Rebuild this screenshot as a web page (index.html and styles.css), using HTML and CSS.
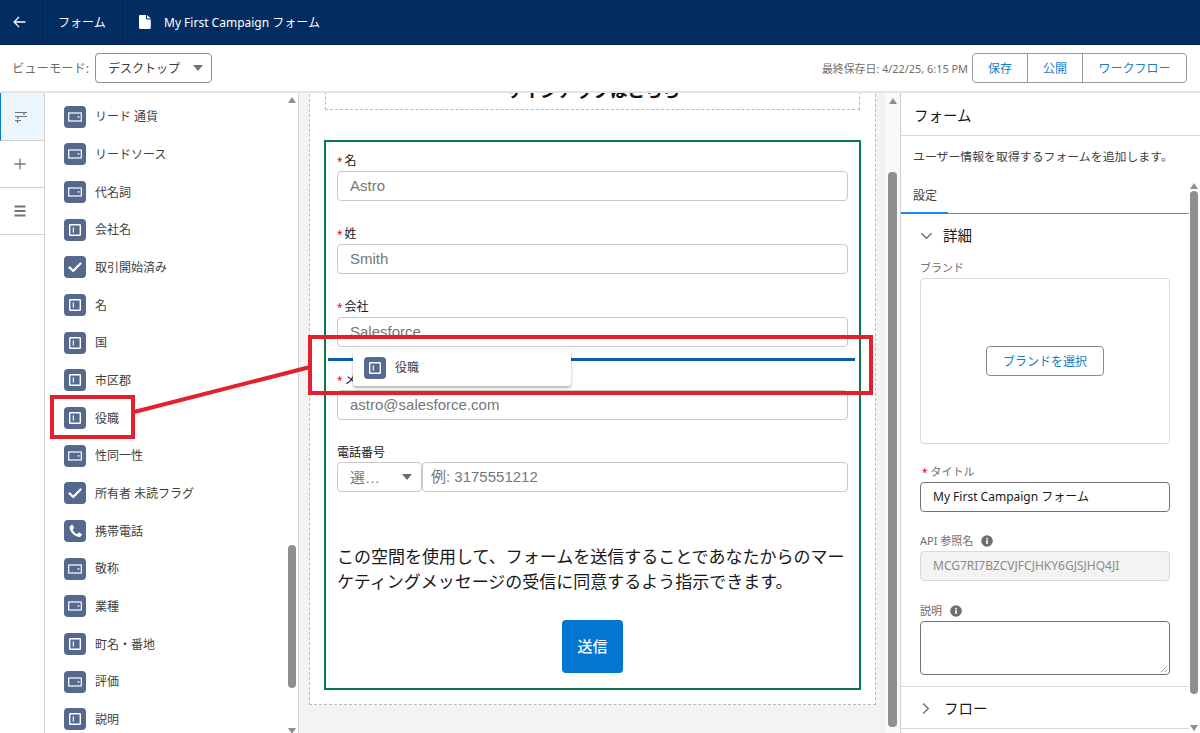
FILE: index.html
```html
<!DOCTYPE html>
<html lang="ja">
<head>
<meta charset="utf-8">
<title>My First Campaign フォーム</title>
<link rel="stylesheet" href="styles.css">
</head>
<body>
<svg class="defs" aria-hidden="true">
  <symbol id="i-pick" viewBox="0 0 22 22"><rect x="4.700" y="7" width="12.600" height="8" fill="none" stroke="#fff" stroke-width="1.200"/><rect x="13.600" y="10.200" width="1.800" height="1.400" fill="#fff"/></symbol>
  <symbol id="i-text" viewBox="0 0 22 22"><rect x="5.700" y="5.700" width="10.600" height="10.600" rx=".6" fill="none" stroke="#fff" stroke-width="1.400"/><rect x="8.700" y="8.300" width="1.400" height="5.400" fill="#dfe5f0"/></symbol>
  <symbol id="i-check" viewBox="0 0 22 22"><path d="M5.500 11.400l3.700 3.600 7.300-7.600" fill="none" stroke="#fff" stroke-width="2.200" stroke-linecap="round" stroke-linejoin="round"/></symbol>
  <symbol id="i-phone" viewBox="0 0 22 22"><path d="M7.300 4.900c.4-.3 1-.3 1.300.2l1.300 2c.3.4.2.9-.1 1.300l-.9.9c-.2.2-.2.4-.1.700.5 1 1 1.700 1.700 2.400.6.600 1.300 1.100 2.200 1.500.3.100.500.100.700-.100l.9-.9c.4-.4.900-.4 1.300-.1l2 1.300c.5.300.5 1 .1 1.400-.8.900-1.800 1.700-3 1.500-2.200-.3-4.300-1.600-5.900-3.200C7.300 12.200 5.900 10 5.600 7.900c-.2-1.200.7-2.200 1.700-3z" fill="#fff"/></symbol>
  <symbol id="i-info" viewBox="0 0 12 12"><circle cx="6" cy="6" r="5.800" fill="#706e6b"/><rect x="5.200" y="5.200" width="1.700" height="3.700" fill="#fff"/><rect x="5.200" y="2.900" width="1.700" height="1.500" fill="#fff"/></symbol>
</svg>

<div class="stage">
  <header class="topbar">
    <div class="tb-cell tb-back">
      <svg class="back" viewBox="0 0 14 12"><path d="M6 1L1.300 6 6 11M1.500 6H13" fill="none" stroke="#fff" stroke-width="1.500" stroke-linecap="round" stroke-linejoin="round"/></svg>
    </div>
    <div class="tb-cell tb-form">フォーム</div>
    <div class="tb-title">
      <svg class="doc" viewBox="0 0 12 14"><path d="M1.200 0H7v3.500c0 .6.400 1 1 1h3.800v8.300c0 .7-.5 1.200-1.200 1.200H1.200C.5 14 0 13.500 0 12.800V1.200C0 .5.500 0 1.200 0zM8 0l3.800 3.600H8z" fill="#fff"/></svg>
      <span>My First Campaign フォーム</span>
    </div>
  </header>

  <div class="toolbar">
    <span class="view-label">ビューモード:</span>
    <div class="select"><span>デスクトップ</span><i class="tri tri-lg"></i></div>
    <span class="saved">最終保存日: 4/22/25, 6:15 PM</span>
    <div class="btn-group">
      <span class="bg-btn bg-a">保存</span>
      <span class="bg-btn bg-a">公開</span>
      <span class="bg-btn bg-b">ワークフロー</span>
    </div>
  </div>

  <main class="main">
    <nav class="rail">
      <div class="rail-tab active">
        <svg class="rail-ic" viewBox="0 0 14 14"><path d="M1 2.500h12M1 6.500h12M1 10.500h6M10 2.500v2.500M4 6.500v2.500M3.500 10.500v2.500" fill="none" stroke="#747474" stroke-width="1.200"/></svg>
      </div>
      <div class="rail-tab">
        <svg class="rail-ic" viewBox="0 0 14 14"><path d="M7 1.500v11M1.500 7h11" fill="none" stroke="#747474" stroke-width="1.300"/></svg>
      </div>
      <div class="rail-tab">
        <svg class="rail-ic" viewBox="0 0 14 14"><path d="M1.500 2.500h11M1.500 7h11M1.500 11.500h11" fill="none" stroke="#747474" stroke-width="2"/></svg>
      </div>
    </nav>

    <section class="fields">
      <ul class="field-list">
        <li class="field-row"><svg class="fi"><use href="#i-pick"/></svg>リード 通貨</li>
        <li class="field-row"><svg class="fi"><use href="#i-pick"/></svg>リードソース</li>
        <li class="field-row"><svg class="fi"><use href="#i-pick"/></svg>代名詞</li>
        <li class="field-row"><svg class="fi"><use href="#i-text"/></svg>会社名</li>
        <li class="field-row"><svg class="fi"><use href="#i-check"/></svg>取引開始済み</li>
        <li class="field-row"><svg class="fi"><use href="#i-text"/></svg>名</li>
        <li class="field-row"><svg class="fi"><use href="#i-text"/></svg>国</li>
        <li class="field-row"><svg class="fi"><use href="#i-text"/></svg>市区郡</li>
        <li class="field-row"><svg class="fi"><use href="#i-text"/></svg>役職</li>
        <li class="field-row"><svg class="fi"><use href="#i-pick"/></svg>性同一性</li>
        <li class="field-row"><svg class="fi"><use href="#i-check"/></svg>所有者 未読フラグ</li>
        <li class="field-row"><svg class="fi"><use href="#i-phone"/></svg>携帯電話</li>
        <li class="field-row"><svg class="fi"><use href="#i-pick"/></svg>敬称</li>
        <li class="field-row"><svg class="fi"><use href="#i-pick"/></svg>業種</li>
        <li class="field-row"><svg class="fi"><use href="#i-text"/></svg>町名・番地</li>
        <li class="field-row"><svg class="fi"><use href="#i-pick"/></svg>評価</li>
        <li class="field-row"><svg class="fi"><use href="#i-text"/></svg>説明</li>
      </ul>
      <div class="sb sb-list">
        <i class="sb-up"></i>
        <i class="sb-thumb"></i>
        <i class="sb-down"></i>
      </div>
    </section>

    <section class="canvas">
      <div class="canvas-view">
        <div class="page">
          <div class="hero"><h1 class="hero-title">サインアップはこちら</h1></div>
          <form class="form">
            <div class="f-label"><b class="req">*</b>名</div>
            <div class="f-input">Astro</div>
            <div class="f-label"><b class="req">*</b>姓</div>
            <div class="f-input">Smith</div>
            <div class="f-label"><b class="req">*</b>会社</div>
            <div class="f-input">Salesforce</div>
            <div class="f-label"><b class="req">*</b>メール</div>
            <div class="f-input">astro@salesforce.com</div>
            <div class="f-label f-label-phone">電話番号</div>
            <div class="phone">
              <div class="f-input ph-code"><span>選…</span><i class="tri"></i></div>
              <div class="f-input ph-num">例: 3175551212</div>
            </div>
            <p class="consent">この空間を使用して、フォームを送信することであなたからのマーケティングメッセージの受信に同意するよう指示できます。</p>
            <div class="submit-wrap"><span class="submit">送信</span></div>
          </form>
        </div>
      </div>
      <div class="sb sb-canvas">
        <i class="sb-up"></i>
        <i class="sb-thumb"></i>
      </div>
    </section>

    <aside class="panel">
      <h2 class="panel-title">フォーム</h2>
      <p class="panel-desc">ユーザー情報を取得するフォームを追加します。</p>
      <div class="panel-body">
        <div class="panel-scroll">
          <div class="tabs"><span class="tab">設定</span></div>
          <div class="acc-head acc-open">
            <svg class="chev" viewBox="0 0 14 14"><path d="M1.500 4.500L7 10l5.500-5.500" fill="none" stroke="#706e6b" stroke-width="1.500"/></svg>
            <span>詳細</span>
          </div>
          <div class="acc-body">
            <div class="p-label p-brand">ブランド</div>
            <div class="brand-box"><span class="brand-btn">ブランドを選択</span></div>
            <div class="p-label p-t"><b class="req">*</b>タイトル</div>
            <div class="p-input">My First Campaign フォーム</div>
            <div class="p-label p-api">API 参照名<svg class="info"><use href="#i-info"/></svg></div>
            <div class="p-input p-dis">MCG7RI7BZCVJFCJHKY6GJSJHQ4JI</div>
            <div class="p-label p-desc">説明<svg class="info"><use href="#i-info"/></svg></div>
            <div class="p-area">
              <svg class="grip" viewBox="0 0 8 8"><path d="M1 7l6-6M4.500 7L7 4.500" fill="none" stroke="#888" stroke-width=".8"/></svg>
            </div>
          </div>
          <div class="acc-head acc-closed">
            <svg class="chev" viewBox="0 0 14 14"><path d="M4.500 1.500L10 7l-5.500 5.500" fill="none" stroke="#706e6b" stroke-width="1.500"/></svg>
            <span>フロー</span>
          </div>
        </div>
        <div class="sb sb-panel">
          <i class="sb-up"></i>
          <i class="sb-thumb"></i>
          <i class="sb-down"></i>
        </div>
      </div>
    </aside>
  </main>

  <div class="drop-line"></div>
  <div class="ghost"><svg class="fi"><use href="#i-text"/></svg>役職</div>
  <svg class="callout" viewBox="0 0 1200 733"><line x1="134" y1="412" x2="310" y2="367" stroke="#e3202e" stroke-width="4"/></svg>
  <div class="mark mark-field"></div>
  <div class="mark mark-form"></div>
</div>
</body>
</html>
```

FILE: styles.css
```css
* { box-sizing: border-box; }
html, body { margin: 0; padding: 0; }
body {
  width: 1200px;
  height: 733px;
  overflow: hidden;
  background: #fff;
  color: #3e3e3c;
  font-family: "Noto Sans", "Noto Sans CJK JP", sans-serif;
  font-size: 12px;
  line-height: 1.25;
}
.defs { position: absolute; width: 0; height: 0; }
.stage { position: relative; width: 1200px; height: 733px; overflow: hidden; display: flex; flex-direction: column; }

/* top bar */
.topbar { height: 45px; flex: none; background: #032d60; color: #fff; display: flex; align-items: stretch; font-size: 12px; border-bottom: 1px solid #02264f; }
.tb-cell { display: flex; align-items: center; border-right: 1px solid #02234a; }
.tb-back { width: 43px; padding-left: 13px; }
.back { width: 13px; height: 12px; }
.tb-form { width: 80px; padding-left: 15px; }
.tb-title { display: flex; align-items: center; padding-left: 16px; gap: 13px; }
.doc { width: 12px; height: 14px; }

/* toolbar */
.toolbar { height: 48px; flex: none; display: flex; align-items: center; padding: 0 13px 1px 12px; border-bottom: 2px solid #e4e4e4; }
.view-label { width: 83px; padding-top: 3px; color: #706e6b; font-size: 12.300px; white-space: nowrap; }
.select { width: 117px; height: 30px; border: 1px solid #8f8f8f; border-radius: 4px; display: flex; align-items: center; justify-content: space-between; padding: 1px 8px 0 12px; color: #3e3e3c; }
.tri { display: block; width: 0; height: 0; border-left: 5px solid transparent; border-right: 5px solid transparent; border-top: 6px solid #747474; }
.saved { margin-left: auto; margin-right: 4px; padding-top: 3px; font-size: 10.900px; color: #706e6b; white-space: nowrap; }
.btn-group { display: flex; height: 30px; margin-top: 1px; border: 1px solid #999; border-radius: 4px; color: #1b7ac4; }
.bg-btn { display: flex; align-items: center; justify-content: center; padding-top: 1px; border-right: 1px solid #999; }
.bg-a { width: 55px; }
.bg-b { width: 103px; border-right: 0; }

/* layout */
.main { flex: 1; min-height: 0; display: flex; }

/* rail */
.rail { width: 45px; flex: none; border-right: 1px solid #d0d0d0; }
.rail-tab { height: 47px; display: flex; align-items: center; justify-content: center; border-bottom: 1px solid #d0d0d0; padding-right: 4px; }
.rail-tab.active { height: 48px; background: #eaf5fe; border-left: 1px solid #0176d3; }
.rail-ic { width: 14px; height: 14px; }

/* field list */
.fields { width: 254px; flex: none; position: relative; display: flex; border-right: 1px solid #d0d0d0; overflow: hidden; }
.field-list { list-style: none; margin: 0; padding: 5px 0 0 19px; flex: 1; min-width: 0; }
.field-row { height: 37.670px; display: flex; align-items: center; gap: 9px; font-size: 12px; color: #3e3e3c; white-space: nowrap; }
.fi { width: 22px; height: 22px; flex: none; background: #54698d; border-radius: 4px; }

/* scrollbars */
.sb { flex: none; display: flex; flex-direction: column; align-items: center; }
.sb i { display: block; flex: none; }
.sb-up { width: 0; height: 0; border-left: 4.500px solid transparent; border-right: 4.500px solid transparent; border-bottom: 6px solid #8f8f8f; }
.sb-down { width: 0; height: 0; border-left: 4.500px solid transparent; border-right: 4.500px solid transparent; border-top: 6px solid #8f8f8f; }
.sb-thumb { width: 8px; background: #8f8f8f; border-radius: 4px; }
.sb-list { width: 14px; padding: 4px 2px 0 4px; }
.sb-list .sb-thumb { height: 143px; margin-top: 442px; }
.sb-list .sb-down { margin-top: 40px; }
.sb-canvas { width: 15px; background: #f9f9f9; padding-top: 5px; }
.sb-canvas .sb-thumb { height: 555px; margin-top: 68px; width: 9px; }
.sb-panel { width: 11px; padding: 6px 1px 0 0; }
.sb-panel .sb-thumb { height: 503px; margin-top: 2px; }
.sb-panel .sb-down { margin-top: 31px; }

/* canvas */
.canvas { width: 602px; flex: none; display: flex; background: #f3f3f3; border-right: 1px solid #d0d0d0; overflow: hidden; }
.canvas-view { flex: 1; min-width: 0; overflow: hidden; padding-left: 10px; }
.page { width: 567px; margin-top: -34px; padding: 0 15px 14px; background: #fff; border: 1px dashed #b9b9b9; }
.hero { height: 50px; margin: 0 0 30px; padding-top: 18px; border: 1px dashed #b9b9b9; border-top: 0; text-align: center; }
.hero-title { margin: 0; font-size: 17.500px; line-height: 24px; font-weight: 700; color: #111; }

/* form */
.form { margin: 0 -1px; padding: 9px 11px 15px; border: 2px solid #0b7a48; color: #181818; }
.f-label { height: 20px; font-size: 12px; line-height: 20px; color: #181818; }
.f-label-phone { height: 19px; }
.req { color: #ea001e; font-weight: 400; font-size: 10px; margin-right: 2px; }
.f-input { height: 30px; margin-bottom: 23px; padding: 0 12px; border: 1px solid #c9c9c9; border-radius: 4px; font-family: "Liberation Sans", "Noto Sans CJK JP", sans-serif; font-size: 15px; line-height: 27px; color: #777; background: #fff; }
.phone { display: flex; gap: 0; }
.ph-code { width: 85px; flex: none; display: flex; align-items: center; justify-content: space-between; padding-right: 9px; }
.ph-code .tri { border-top-color: #706e6b; }
.ph-num { flex: 1; padding-left: 8px; }
.consent { margin: 28px 0 0; font-size: 17px; line-height: 25px; color: #181818; font-family: "Noto Sans CJK JP", "Noto Sans", sans-serif; }
.submit-wrap { display: flex; justify-content: center; margin-top: 27px; }
.submit { width: 61px; height: 53px; background: #0176d3; color: #fff; border-radius: 4px; display: flex; align-items: center; justify-content: center; font-size: 15px; font-weight: 500; }

/* right panel */
.panel { flex: 1; min-width: 0; display: flex; flex-direction: column; overflow: hidden; }
.panel-title { margin: 0; height: 43px; padding: 10px 13px 0; font-size: 14.500px; line-height: 24px; font-weight: 400; color: #181818; border-bottom: 1px solid #d9d9d9; flex: none; }
.panel-desc { margin: 0; height: 41px; padding: 11px 12px 0; font-size: 11.900px; line-height: 18px; color: #3e3e3c; white-space: nowrap; flex: none; }
.panel-body { flex: 1; min-height: 0; display: flex; }
.panel-scroll { width: 288px; flex: none; }
.tabs { height: 37px; border-bottom: 1px solid #8a8a8a; padding-top: 7px; }
.tab { display: block; width: 47px; height: 30px; padding: 2px 0 0 12px; border-bottom: 2px solid #1589ee; line-height: 20px; color: #3e3e3c; }
.acc-head { display: flex; align-items: center; font-size: 14.500px; color: #181818; }
.acc-open { height: 42px; padding-left: 19px; gap: 10px; }
.acc-closed { height: 43px; padding: 1px 0 0 18px; gap: 12px; border-top: 1px solid #d9d9d9; border-bottom: 1px solid #d9d9d9; }
.chev { width: 13px; height: 13px; flex: none; }
.acc-body { padding: 0 19px; height: 430px; }
.p-label { display: flex; align-items: center; font-size: 11px; line-height: 16px; color: #706e6b; }
.p-brand { height: 22px; padding-top: 2px; }
.p-t { height: 38px; padding-top: 18px; color: #706e6b; }
.p-t .req { margin: 0 3px 0 2px; font-size: 10px; }
.p-api { height: 39px; padding-top: 19px; }
.p-desc { height: 40px; padding-top: 20px; }
.info { width: 12px; height: 12px; margin-left: 8px; }
.brand-box { width: 250px; height: 166px; border: 1px solid #d9d9d9; border-radius: 4px; display: flex; align-items: center; justify-content: center; }
.brand-btn { width: 118px; height: 30px; border: 1px solid #8a8a8a; border-radius: 4px; color: #1b7ac4; display: flex; align-items: center; justify-content: center; }
.p-input { width: 250px; height: 30px; padding: 0 12px; border: 1px solid #747474; border-radius: 4px; font-size: 12px; line-height: 28px; color: #181818; white-space: nowrap; }
.p-dis { background: #f3f3f3; border-color: #d9d9d9; color: #8a8a8a; }
.p-area { position: relative; width: 250px; height: 54px; border: 1px solid #747474; border-radius: 4px; }
.grip { position: absolute; right: 1px; bottom: 1px; width: 8px; height: 8px; }

/* overlays */
.drop-line { position: absolute; left: 328px; top: 358px; width: 527px; height: 2.500px; background: #0b5cab; }
.ghost { position: absolute; left: 353px; top: 349px; width: 218px; height: 37px; padding-left: 11px; display: flex; align-items: center; gap: 9px; background: #fff; border-radius: 3px; box-shadow: 0 2px 3px rgba(0,0,0,.3); color: #3e3e3c; }
.callout { position: absolute; left: 0; top: 0; width: 1200px; height: 733px; pointer-events: none; }
.mark { position: absolute; border: 4px solid #e3202e; pointer-events: none; }
.mark-field { left: 50px; top: 395px; width: 85px; height: 44px; }
.mark-form { left: 308px; top: 335px; width: 565px; height: 60px; }
```
